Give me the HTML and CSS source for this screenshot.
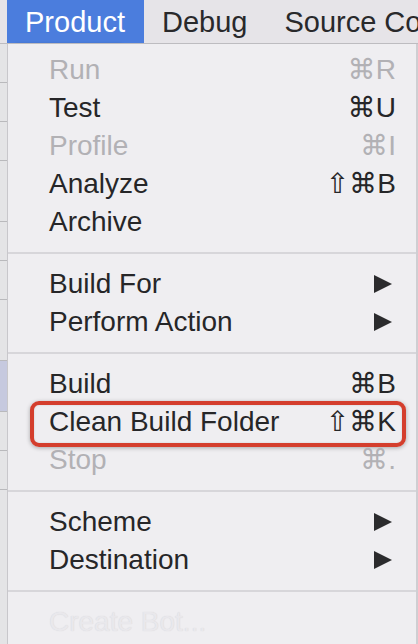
FILE: index.html
```html
<!DOCTYPE html>
<html lang="en">
<head>
  <meta charset="UTF-8" />
  <meta name="viewport" content="width=device-width, initial-scale=1.0" />
  <title>Product Menu</title>
  <link rel="stylesheet" href="styles.css">
</head>
<body>

  <!-- Menu bar -->
  <header class="menubar">
    <span class="menu-title active">Product</span>
    <span class="menu-title">Debug</span>
    <span class="menu-title">Source Co</span>
    <span class="title-mark"></span>
  </header>

  <div class="screen">
    <!-- Window behind the menu -->
    <div class="backdrop">
      <div class="bd-row"></div>
      <div class="bd-row"></div>
      <div class="bd-row"></div>
      <div class="bd-row tall"></div>
      <div class="bd-row"></div>
      <div class="bd-row"></div>
      <div class="bd-row tall"></div>
      <div class="bd-row sel"></div>
      <div class="bd-row"></div>
      <div class="bd-row"></div>
    </div>

    <!-- Dropdown -->
    <div class="dropdown">
      <div class="item disabled"><span>Run</span><span class="key">⌘R</span></div>
      <div class="item"><span>Test</span><span class="key">⌘U</span></div>
      <div class="item disabled"><span>Profile</span><span class="key">⌘I</span></div>
      <div class="item"><span>Analyze</span><span class="key">⇧⌘B</span></div>
      <div class="item"><span>Archive</span></div>

      <div class="sep"></div>

      <div class="item"><span>Build For</span><span class="arrow"></span></div>
      <div class="item"><span>Perform Action</span><span class="arrow"></span></div>

      <div class="sep"></div>

      <div class="item"><span>Build</span><span class="key">⌘B</span></div>
      <div class="item marked"><span>Clean Build Folder</span><span class="key">⇧⌘K</span></div>
      <div class="item disabled"><span>Stop</span><span class="key">⌘.</span></div>

      <div class="sep"></div>

      <div class="item"><span>Scheme</span><span class="arrow"></span></div>
      <div class="item"><span>Destination</span><span class="arrow"></span></div>

      <div class="sep"></div>

      <div class="item ghost"><span>Create Bot...</span></div>
    </div>

    <div class="edge"></div>
  </div>

</body>
</html>
```

FILE: styles.css
```css
/* General */
body {
  margin: 0;
  padding: 0;
  width: 418px;
  height: 644px;
  overflow: hidden;
  background: #efeef1;
  font-family: "Liberation Sans", "DejaVu Sans", Arial, sans-serif;
  color: #262628;
}

/* Menu bar */
.menubar {
  position: relative;
  display: flex;
  height: 44px;
  padding-left: 7px;
  background: #e6e4e8;
  border-bottom: 1px solid #bdbcc0;
  box-sizing: border-box;
  white-space: nowrap;
  overflow: hidden;
}

.menu-title {
  padding: 0 19px 0 18px;
  font-size: 29px;
  line-height: 44px;
  color: #29292b;
}

.menu-title.active {
  background: #4b7ddd;
  color: #ffffff;
}

.title-mark {
  position: absolute;
  left: 14px;
  top: 43px;
  width: 109px;
  height: 7px;
  border-radius: 4px;
  background: #d84431;
  box-shadow: 0 1px 3px rgba(0, 0, 0, 0.25);
  z-index: 5;
}

/* Area under the bar */
.screen {
  display: flex;
  height: 600px;
}

.backdrop {
  width: 7px;
  background: #e4e4e6;
  display: flex;
  flex-direction: column;
}

.bd-row {
  height: 38px;
  border-bottom: 1px solid #b9b9bc;
}

.bd-row.tall {
  height: 60px;
}

.bd-row.sel {
  background: #c6c9df;
  height: 50px;
}

.edge {
  width: 2px;
  background: #cfced2;
}

/* Dropdown */
.dropdown {
  flex: 1;
  padding-top: 7px;
  background: #efeef1;
  border-left: 1px solid #c8c7cb;
  box-sizing: border-box;
}

.item {
  position: relative;
  display: flex;
  justify-content: space-between;
  align-items: center;
  height: 38px;
  padding: 0 20px 0 41px;
  font-size: 28px;
  line-height: 38px;
}

.item.disabled {
  color: #b2b1b5;
}

.item.ghost {
  color: #e9e8ec;
  text-shadow: 0 0 1px #d2d1d5;
}

.arrow {
  width: 0;
  height: 0;
  margin-right: 4px;
  border-top: 9px solid transparent;
  border-bottom: 9px solid transparent;
  border-left: 18px solid #2b2b2d;
}

.item.marked::after {
  content: "";
  position: absolute;
  left: 22px;
  right: 10px;
  top: -2px;
  bottom: -6px;
  border: 4px solid #d43e2d;
  border-radius: 9px;
  box-shadow: 0 1px 4px rgba(0, 0, 0, 0.3), inset 0 0 2px rgba(0, 0, 0, 0.15);
}

.sep {
  height: 2px;
  margin: 11px 0;
  background: #d7d6da;
}
```
